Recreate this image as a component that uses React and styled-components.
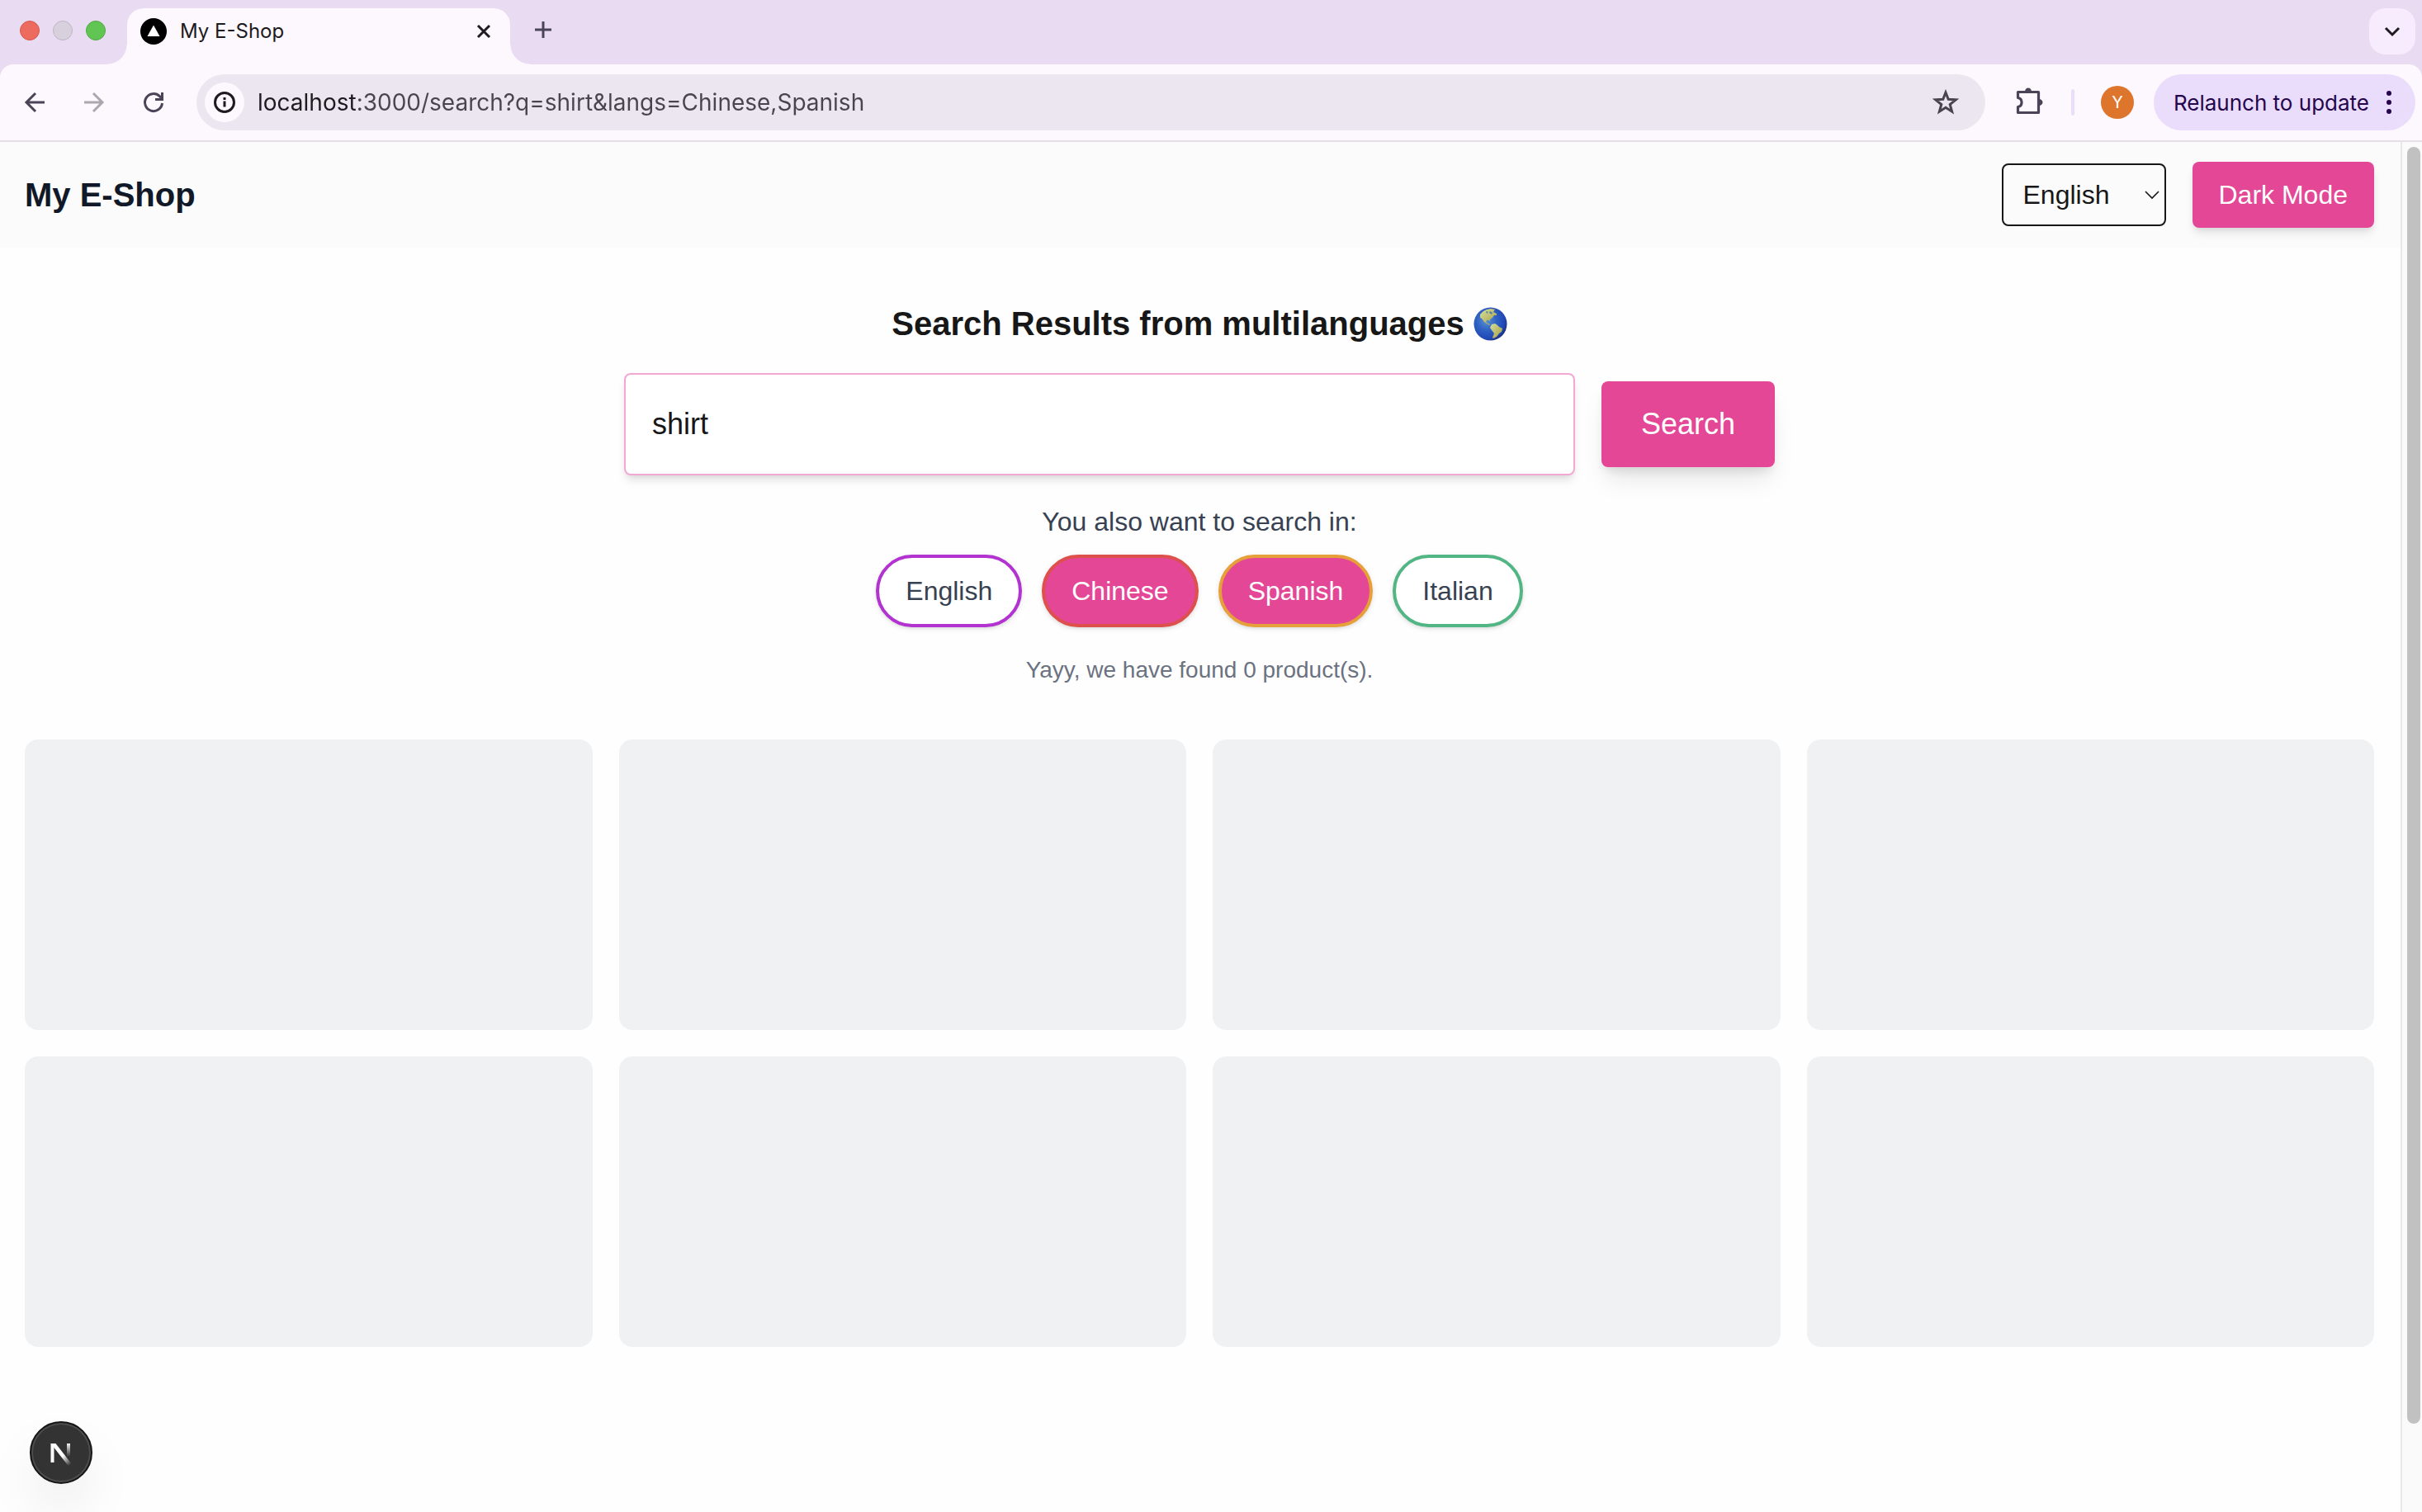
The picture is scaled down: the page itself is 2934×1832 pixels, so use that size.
import React, { useState } from 'react';
import styled, { createGlobalStyle } from 'styled-components';

const ui = 'Inter, Roboto, "Liberation Sans", sans-serif';
const arial = '"Liberation Sans", Arial, Helvetica, sans-serif';
const pink = '#e34796';

const GlobalStyle = createGlobalStyle`
  *, *::before, *::after { box-sizing: border-box; }
  body { margin: 0; background: #fefefe; font-family: ${arial}; }
  button, input, select { font: inherit; margin: 0; }
  button { cursor: pointer; }
  h1, h2, p { margin: 0; }
`;

const Window = styled.div`
  display: flex;
  flex-direction: column;
  min-height: 100vh;
`;

/* Browser frame */

const TabStrip = styled.div`
  display: flex;
  align-items: flex-start;
  height: 78px;
  padding: 10px 8px 0 24px;
  background: #e9dcf2;
  font-family: ${ui};
`;

const TrafficLights = styled.div`
  display: flex;
  gap: 16px;
  margin: 15px 26px 0 0;
`;

const Light = styled.button`
  width: 24px;
  height: 24px;
  padding: 0;
  border: 1px solid ${(p) => p.$edge};
  border-radius: 50%;
  background: ${(p) => p.$color};
`;

const Tab = styled.div`
  position: relative;
  display: flex;
  align-items: center;
  width: 464px;
  height: 68px;
  padding: 0 20px 12px 16px;
  border-radius: 20px 20px 0 0;
  background: #fdf7fe;

  &::before, &::after {
    content: '';
    position: absolute;
    bottom: 0;
    width: 24px;
    height: 24px;
  }
  &::before {
    right: 100%;
    background: radial-gradient(circle at 0 0, transparent 23px, #fdf7fe 24px);
  }
  &::after {
    left: 100%;
    background: radial-gradient(circle at 100% 0, transparent 23px, #fdf7fe 24px);
  }
`;

const TabTitle = styled.span`
  flex: 1;
  margin-left: 16px;
  font-size: 24px;
  line-height: 32px;
  color: #1d1b20;
`;

const IconButton = styled.button`
  display: grid;
  place-items: center;
  flex: none;
  width: ${(p) => p.$size || 24}px;
  height: ${(p) => p.$size || 24}px;
  padding: 0;
  border: 0;
  border-radius: ${(p) => p.$radius || '50%'};
  background: ${(p) => p.$bg || 'transparent'};
  color: ${(p) => p.$color || '#4a4458'};
`;

const NewTab = styled(IconButton)`
  margin: 10px auto 0 24px;
`;

const ToolbarBack = styled.div`
  background: #e9dcf2;
`;

const Toolbar = styled.nav`
  display: flex;
  align-items: center;
  height: 94px;
  padding: 0 8px 0 18px;
  border-bottom: 2px solid #e6dfea;
  border-radius: 16px 16px 0 0;
  background: #fdf7fe;
  font-family: ${ui};
`;

const NavButtons = styled.div`
  display: flex;
  gap: 24px;
  margin-right: 28px;
`;

const Omnibox = styled.div`
  flex: 1;
  display: flex;
  align-items: center;
  height: 68px;
  margin-right: 30px;
  padding: 0 24px 0 10px;
  border-radius: 34px;
  background: #ece6f0;
`;

const Address = styled.input`
  flex: 1;
  min-width: 0;
  height: 40px;
  margin-left: 16px;
  padding: 0;
  border: 0;
  outline: 0;
  background: linear-gradient(90deg, #1d1b20 120px, #49454e 120px);
  background-clip: text;
  -webkit-background-clip: text;
  color: transparent;
  font-size: 28px;
`;

const Divider = styled.span`
  width: 4px;
  height: 32px;
  margin: 0 32px 0 26px;
  border-radius: 2px;
  background: #eaddfb;
`;

const Avatar = styled.button`
  width: 40px;
  height: 40px;
  padding: 0;
  border: 0;
  border-radius: 50%;
  background: #de752d;
  color: #fff;
  font-size: 20px;
`;

const Relaunch = styled.button`
  display: flex;
  align-items: center;
  gap: 12px;
  height: 68px;
  margin-left: 24px;
  padding: 0 20px 0 24px;
  border: 0;
  border-radius: 34px;
  background: #eaddfb;
  color: #25064d;
  font-size: 26px;
  white-space: nowrap;
`;

/* Page */

const Viewport = styled.div`
  flex: 1;
  display: flex;
`;

const Page = styled.div`
  flex: 1;
  min-width: 0;
`;

const Header = styled.header`
  display: flex;
  align-items: center;
  justify-content: space-between;
  height: 128px;
  padding: 0 32px 0 30px;
  background: #fbfbfb;
`;

const Brand = styled.h1`
  font-size: 40px;
  line-height: 56px;
  color: #111827;
`;

const HeaderActions = styled.div`
  display: flex;
  align-items: center;
  gap: 32px;
`;

const SelectWrap = styled.div`
  position: relative;
  color: #171717;

  svg {
    position: absolute;
    top: 32px;
    right: 8px;
    pointer-events: none;
  }
`;

const LanguageSelect = styled.select`
  display: block;
  width: 199px;
  height: 76px;
  padding: 0 24px;
  border: 2px solid #171717;
  border-radius: 8px;
  appearance: none;
  background: transparent;
  color: inherit;
  font-size: 32px;
`;

const PrimaryButton = styled.button`
  height: ${(p) => (p.$large ? 104 : 80)}px;
  padding: 0 ${(p) => (p.$large ? 48 : 32)}px;
  border: 0;
  border-radius: 8px;
  background: ${pink};
  color: #fff;
  font-size: ${(p) => (p.$large ? 36 : 32)}px;
  box-shadow: ${(p) =>
    p.$large
      ? '0 20px 30px -6px rgba(0,0,0,.1), 0 8px 12px -4px rgba(0,0,0,.1)'
      : '0 8px 12px -2px rgba(0,0,0,.1), 0 4px 8px -4px rgba(0,0,0,.1)'};
`;

const Main = styled.main`
  display: flex;
  flex-direction: column;
  align-items: center;
  padding: 64px 32px 64px 30px;
`;

const Heading = styled.h2`
  display: flex;
  align-items: center;
  gap: 11px;
  font-size: 40px;
  line-height: 56px;
  color: #171717;
`;

const SearchForm = styled.form`
  display: flex;
  align-items: center;
  gap: 32px;
  margin: 32px 0;
`;

const SearchInput = styled.input`
  width: 1152px;
  height: 124px;
  padding: 0 32px;
  border: 2px solid #f3a8d3;
  border-radius: 8px;
  outline: 0;
  background: #fff;
  color: #171717;
  font-size: 36px;
  box-shadow: 0 8px 12px -2px rgba(0,0,0,.1), 0 4px 8px -4px rgba(0,0,0,.1);
`;

const Prompt = styled.p`
  font-size: 32px;
  line-height: 48px;
  color: #374151;
`;

const Languages = styled.div`
  display: flex;
  gap: 24px;
  margin: 16px 0 32px;
`;

const LanguagePill = styled.button`
  height: 88px;
  padding: 0 32px;
  border: 4px solid ${(p) => p.$border};
  border-radius: 44px;
  background: ${(p) => (p['aria-pressed'] ? pink : '#fff')};
  color: ${(p) => (p['aria-pressed'] ? '#fff' : '#374151')};
  font-size: 32px;
  box-shadow: 0 2px 6px rgba(0,0,0,.1), 0 2px 4px -2px rgba(0,0,0,.1);
`;

const Status = styled.p`
  margin-bottom: 64px;
  font-size: 28px;
  line-height: 40px;
  color: #6b7280;
`;

const ProductGrid = styled.section`
  display: grid;
  grid-template-columns: repeat(4, 1fr);
  gap: 32px;
  width: 100%;
`;

const Placeholder = styled.div`
  height: 352px;
  border-radius: 16px;
  background: #f0f1f3;
`;

const ScrollTrack = styled.div`
  display: flex;
  flex-direction: column;
  width: 26px;
  padding: 6px 2px 0 6px;
  border-left: 2px solid #e8e8e8;
  background: #fafafa;

  &::after { content: ''; flex: 107; }
`;

const ScrollThumb = styled.div`
  flex: 1547;
  border-radius: 8px;
  background: #c1c1c1;
`;

const DevBadge = styled.button`
  position: fixed;
  left: 36px;
  bottom: 34px;
  display: grid;
  place-items: center;
  width: 76px;
  height: 76px;
  padding: 0;
  border: 2px solid #171717;
  border-radius: 50%;
  background: #333;
  box-shadow: inset 0 0 0 2px #4d4d4d, 0 32px 64px -8px rgba(0,0,0,.1);
`;

const Stroke = ({ size, w = 3, children, ...rest }) => (
  <svg width={size} height={size} viewBox={`0 0 ${size} ${size}`} fill="none" stroke="currentColor" strokeWidth={w} aria-hidden="true" {...rest}>
    {children}
  </svg>
);

const Globe = () => (
  <svg width="41" height="41" viewBox="0 0 41 41" role="img" aria-label="Globe showing the Americas">
    <defs>
      <radialGradient id="sea" cx=".38" cy=".4" r=".65">
        <stop offset="0" stopColor="#5b93cf" />
        <stop offset=".45" stopColor="#2f62c4" />
        <stop offset=".85" stopColor="#2147b4" />
        <stop offset="1" stopColor="#1b2f7c" />
      </radialGradient>
      <linearGradient id="land" x1="0" y1="0" x2="1" y2="1">
        <stop offset="0" stopColor="#d3e0a0" />
        <stop offset="1" stopColor="#a99c3c" />
      </linearGradient>
    </defs>
    <circle cx="20.5" cy="20.5" r="20" fill="url(#sea)" />
    <g fill="url(#land)">
      <path d="M8 9 12 5 16 3 21 2 26 3 24 6 28 8 28 10 25 10 23 13 20 15 20 17 18 16 16 16 15 18 17 20 19 20 20 22 17 21 13 18 10 14 8 13Z" />
      <path d="M22 21 26 20 29 22 31 24 35 26 34 30 31 32 28 36 24 38 23 37 25 32 22 28 20 25Z" />
    </g>
    <path d="m20 5 3 2-1 2-3-2zM15 5l3 1-2 2zM25 5l2 3" fill="#4d7fb0" />
  </svg>
);

const LANGUAGES = [
  { name: 'English', border: '#b233d0' },
  { name: 'Chinese', border: '#dd504c' },
  { name: 'Spanish', border: '#e7a039' },
  { name: 'Italian', border: '#52b584' },
];

export default function App() {
  const [query, setQuery] = useState('shirt');
  const [active, setActive] = useState(['Chinese', 'Spanish']);
  const toggle = (name) =>
    setActive((list) => (list.includes(name) ? list.filter((n) => n !== name) : [...list, name]));

  return (
    <Window>
      <GlobalStyle />
      <TabStrip>
        <TrafficLights>
          <Light $color="#ed6a5e" $edge="#d5584c" aria-label="Close window" />
          <Light $color="#d8d0dd" $edge="#bdb6c2" aria-label="Minimize window" />
          <Light $color="#61c554" $edge="#4fa943" aria-label="Zoom window" />
        </TrafficLights>
        <Tab>
          <svg width="32" height="32" viewBox="0 0 32 32" aria-hidden="true">
            <circle cx="16" cy="16" r="16" />
            <path d="M16 8.500 23.500 22h-15z" fill="#fff" />
          </svg>
          <TabTitle>My E-Shop</TabTitle>
          <IconButton $color="#1d1b20" aria-label="Close tab">
            <Stroke size={24}><path d="m5 5 14 14M19 5 5 19" /></Stroke>
          </IconButton>
        </Tab>
        <NewTab $size={32} aria-label="New tab">
          <Stroke size={32}><path d="M16 6v20M6 16h20" /></Stroke>
        </NewTab>
        <IconButton $size={56} $radius="20px" $bg="#f7ecfd" $color="#1d1b20" aria-label="Search tabs">
          <Stroke size={24} w={3}><path d="m4 8 8 8 8-8" /></Stroke>
        </IconButton>
      </TabStrip>

      <ToolbarBack>
        <Toolbar aria-label="Browser toolbar">
          <NavButtons>
            <IconButton $size={48} aria-label="Back">
              <Stroke size={32}><path d="M28 16H6M17 5 6 16l11 11" /></Stroke>
            </IconButton>
            <IconButton $size={48} $color="#aba6b0" aria-label="Forward">
              <Stroke size={32}><path d="M4 16h22M15 5l11 11-11 11" /></Stroke>
            </IconButton>
            <IconButton $size={48} aria-label="Reload">
              <Stroke size={32}>
                <path d="M26.500 17A10.500 10.500 0 1 1 23.400 8.600L26 11.200" />
                <path d="M26.500 4v8.500H18" />
              </Stroke>
            </IconButton>
          </NavButtons>
          <Omnibox>
            <IconButton $size={48} $bg="#fdf7fe" $color="#1d1b20" aria-label="Site information">
              <Stroke size={28}>
                <circle cx="14" cy="14" r="11.5" />
                <path d="M14 12.500v7M14 8v3" />
              </Stroke>
            </IconButton>
            <Address aria-label="Address" defaultValue="localhost:3000/search?q=shirt&langs=Chinese,Spanish" />
            <IconButton $size={48} $color="#49454e" aria-label="Bookmark this page">
              <Stroke size={32} w={3}>
                <path d="m16 4 3.200 8.300 9 .5-7 5.700 2.400 8.700L16 22.300l-7.600 4.900 2.400-8.700-7-5.700 9-.5z" />
              </Stroke>
            </IconButton>
          </Omnibox>
          <IconButton $size={48} aria-label="Extensions">
            <svg width="36" height="36" viewBox="0 0 36 36" aria-hidden="true">
              <path d="M3.500 5.500H28.500V30.500H3.500V23.500a5.600 5.600 0 0 0 0-11Z" fill="none" stroke="currentColor" strokeWidth="3.2" strokeLinejoin="round" />
              <path d="M12 5a4 4.500 0 0 1 8 0zM29 14a4.500 4 0 0 1 0 8z" fill="currentColor" />
            </svg>
          </IconButton>
          <Divider />
          <Avatar aria-label="Profile">Y</Avatar>
          <Relaunch>
            Relaunch to update
            <svg width="24" height="32" viewBox="0 0 24 32" fill="currentColor" aria-hidden="true">
              <circle cx="12" cy="5" r="3" /><circle cx="12" cy="16" r="3" /><circle cx="12" cy="27" r="3" />
            </svg>
          </Relaunch>
        </Toolbar>
      </ToolbarBack>

      <Viewport>
        <Page>
          <Header>
            <Brand>My E-Shop</Brand>
            <HeaderActions>
              <SelectWrap>
                <LanguageSelect aria-label="Language" defaultValue="English">
                  {LANGUAGES.map((l) => <option key={l.name}>{l.name}</option>)}
                </LanguageSelect>
                <svg width="18" height="12" viewBox="0 0 18 12" fill="none" stroke="currentColor" strokeWidth="1.6" aria-hidden="true">
                  <path d="m1 2 8 8 8-8" />
                </svg>
              </SelectWrap>
              <PrimaryButton>Dark Mode</PrimaryButton>
            </HeaderActions>
          </Header>
          <Main>
            <Heading>Search Results from multilanguages <Globe /></Heading>
            <SearchForm onSubmit={(e) => e.preventDefault()}>
              <SearchInput aria-label="Search products" value={query} onChange={(e) => setQuery(e.target.value)} />
              <PrimaryButton $large>Search</PrimaryButton>
            </SearchForm>
            <Prompt>You also want to search in:</Prompt>
            <Languages>
              {LANGUAGES.map((l) => (
                <LanguagePill key={l.name} $border={l.border} aria-pressed={active.includes(l.name)} onClick={() => toggle(l.name)}>
                  {l.name}
                </LanguagePill>
              ))}
            </Languages>
            <Status>Yayy, we have found 0 product(s).</Status>
            <ProductGrid aria-label="Products">
              {Array.from({ length: 8 }, (_, i) => <Placeholder key={i} />)}
            </ProductGrid>
          </Main>
        </Page>
        <ScrollTrack><ScrollThumb /></ScrollTrack>
      </Viewport>

      <DevBadge aria-label="Open developer tools">
        <svg width="40" height="40" viewBox="0 0 40 40" aria-hidden="true">
          <defs>
            <linearGradient id="slash" gradientUnits="userSpaceOnUse" x1="22" y1="24" x2="31" y2="35">
              <stop stopColor="#fff" /><stop offset="1" stopColor="#fff" stopOpacity="0" />
            </linearGradient>
            <linearGradient id="bar" gradientUnits="userSpaceOnUse" x1="29" y1="8" x2="29" y2="25">
              <stop stopColor="#fff" /><stop offset="1" stopColor="#fff" stopOpacity="0" />
            </linearGradient>
          </defs>
          <rect x="7.5" y="9" width="4" height="23" fill="#fff" />
          <path d="M7.500 9h6L32.500 33.500 29 36.500Z" fill="url(#slash)" />
          <rect x="27" y="9" width="4" height="16" fill="url(#bar)" />
        </svg>
      </DevBadge>
    </Window>
  );
}
